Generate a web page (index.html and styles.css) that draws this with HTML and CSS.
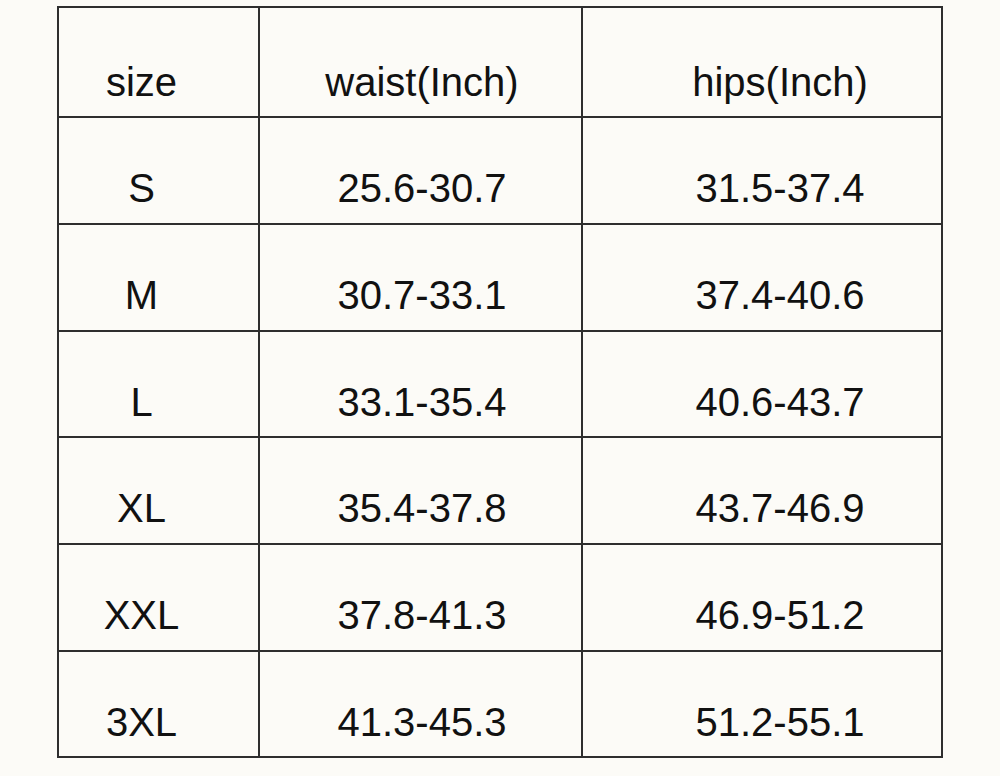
FILE: index.html
```html
<!DOCTYPE html>
<html lang="en">

<head>
    <meta charset="UTF-8">
    <meta name="viewport" content="width=device-width, initial-scale=1.0">
    <title>Size chart</title>
    <link rel="stylesheet" href="styles.css">
</head>

<body>
    <table class="chart">
        <colgroup>
            <col class="c1">
            <col class="c2">
            <col class="c3">
        </colgroup>
        <tr class="head">
            <td>size</td>
            <td>waist(Inch)</td>
            <td>hips(Inch)</td>
        </tr>
        <tr class="r107">
            <td>S</td>
            <td>25.6-30.7</td>
            <td>31.5-37.4</td>
        </tr>
        <tr class="r107">
            <td>M</td>
            <td>30.7-33.1</td>
            <td>37.4-40.6</td>
        </tr>
        <tr class="r106">
            <td>L</td>
            <td>33.1-35.4</td>
            <td>40.6-43.7</td>
        </tr>
        <tr class="r107">
            <td>XL</td>
            <td>35.4-37.8</td>
            <td>43.7-46.9</td>
        </tr>
        <tr class="r107">
            <td>XXL</td>
            <td>37.8-41.3</td>
            <td>46.9-51.2</td>
        </tr>
        <tr class="r106">
            <td>3XL</td>
            <td>41.3-45.3</td>
            <td>51.2-55.1</td>
        </tr>
    </table>
</body>

</html>
```

FILE: styles.css
```css
body {
    margin: 0;
    background-color: #fcfbf7;
    font-family: "Liberation Sans", Arial, sans-serif;
    color: #111;
}
.chart {
    margin: 6px 0 0 57px;
    width: 884px;
    border-collapse: collapse;
    border: 2px solid #2a2a2a;
    table-layout: fixed;
}
.c1 {
    width: 201px;
}
.c2 {
    width: 323px;
}
.c3 {
    width: 360px;
}
.chart td {
    border: 2px solid #2e2e2e;
    box-sizing: border-box;
    padding: 47px 0 0 0;
    vertical-align: top;
    text-align: center;
    font-size: 40px;
    line-height: 46px;
}
.chart td:first-child {
    padding-right: 34px;
}
.chart td:nth-child(2) {
    padding-left: 3px;
}
.chart td:last-child {
    padding-left: 36px;
}
.chart .head td {
    padding-top: 51px;
}
.head {
    height: 110px;
}
.r107 {
    height: 107px;
}
.r106 {
    height: 106px;
}
```
